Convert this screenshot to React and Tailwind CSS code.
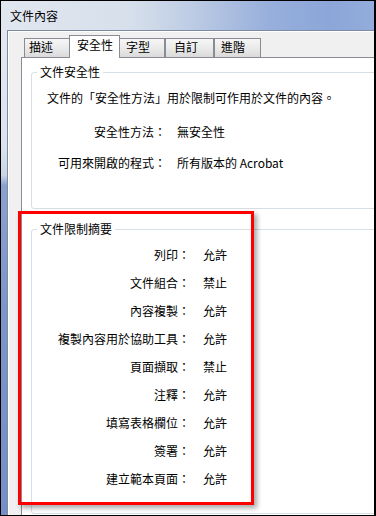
import React from "react";

const FONT = { fontFamily: '"Noto Sans CJK TC", "Noto Sans", sans-serif' };

function Tab({ label, w, pl, active }) {
  if (active) {
    return (
      <div
        className={`relative z-10 -mx-[2px] mb-[-1px] h-[23px] shrink-0 border border-b-0 border-[#898c95] bg-white pt-[1px] text-[12px] leading-[16px] text-black ${w} ${pl}`}
      >
        {label}
      </div>
    );
  }
  return (
    <div
      className={`h-[19px] shrink-0 border border-b-0 border-[#898c95] bg-[linear-gradient(to_bottom,#f6f6f6,#e9e9e9_55%,#dadada)] text-[12px] leading-[16px] text-black ${w} ${pl}`}
    >
      {label}
    </div>
  );
}

const restrictions = [
  ["列印", "允許"],
  ["文件組合", "禁止"],
  ["內容複製", "允許"],
  ["複製內容用於協助工具", "允許"],
  ["頁面擷取", "禁止"],
  ["注釋", "允許"],
  ["填寫表格欄位", "允許"],
  ["簽署", "允許"],
  ["建立範本頁面", "允許"],
];

export default function App() {
  return (
    <div
      style={FONT}
      className="relative h-[516px] w-[376px] overflow-hidden border border-r-2 border-black bg-[#f0f0f0]"
    >
      <div className="flex h-full flex-col">
        {/* title bar */}
        <div className="flex h-[29px] shrink-0 items-center bg-[linear-gradient(to_right,#e1e7ef_0%,#d6dfeb_35%,#bccbe4_52%,#97afdb_72%,#8ba6d8_88%,#93acdb_100%)] pl-[9px] text-[12px] leading-[16px] text-black">
          文件內容
        </div>
        <div className="flex min-h-0 flex-1">
          {/* left frame */}
          <div className="w-[6px] shrink-0 bg-[linear-gradient(to_bottom,#e3e8f0_0%,#dce3ed_24%,#c9d4e6_30%,#8aa2d0_32%,#7b95c8_60%,#7490c6_100%)]" />
          {/* dialog body */}
          <div className="min-w-0 flex-1 overflow-hidden border-l border-t border-[#7d8ba2] bg-[#f0f0f0] pl-[13px] pt-[4px] shadow-[inset_1px_1px_0_#ffffff]">
            {/* tabs */}
            <div className="flex h-[22px] items-end pl-[3px]">
              <Tab label="描述" w="w-[47px]" pl="pl-[4px]" />
              <Tab label="安全性" w="w-[51px]" pl="pl-[7px]" active />
              <Tab label="字型" w="w-[47px]" pl="pl-[7px]" />
              <Tab label="自訂" w="w-[49px]" pl="pl-[8px]" />
              <Tab label="進階" w="w-[47px]" pl="pl-[6px]" />
            </div>
            {/* panel */}
            <div className="h-[600px] w-[420px] border-l border-t border-[#898c95] bg-white pl-[9px] pt-[6px] text-[12px] leading-[16px] text-black">
              <fieldset className="w-[400px] rounded-[3px] border border-[#d5dfe5] pb-[37px]">
                <legend className="ml-[5px] px-[3px] leading-[16px]">文件安全性</legend>
                <div className="mt-[10px] pl-[15px]">
                  文件的「安全性方法」用於限制可作用於文件的內容。
                </div>
                <div className="mt-[18px] flex">
                  <div className="w-[134px] shrink-0 text-right">安全性方法：</div>
                  <div className="ml-[11px]">無安全性</div>
                </div>
                <div className="mt-[15px] flex">
                  <div className="w-[134px] shrink-0 text-right">可用來開啟的程式：</div>
                  <div className="ml-[11px]">所有版本的 Acrobat</div>
                </div>
              </fieldset>
              <fieldset className="mt-[12px] w-[400px] rounded-[3px] border border-[#d5dfe5] pb-[20px]">
                <legend className="ml-[5px] px-[3px] leading-[16px]">文件限制摘要</legend>
                <div className="mt-[4px] flex flex-col">
                  {restrictions.map(([k, v]) => (
                    <div key={k} className="flex h-[28px] items-center">
                      <div className="w-[158px] shrink-0 text-right">{k}：</div>
                      <div className="ml-[13px]">{v}</div>
                    </div>
                  ))}
                </div>
              </fieldset>
            </div>
          </div>
        </div>
      </div>
      {/* red highlight */}
      <div className="pointer-events-none absolute left-[17px] top-[210px] h-[294px] w-[236px] border-[3px] border-[#ff0000] shadow-[3px_3px_5px_rgba(0,0,0,0.35)]" />
    </div>
  );
}
